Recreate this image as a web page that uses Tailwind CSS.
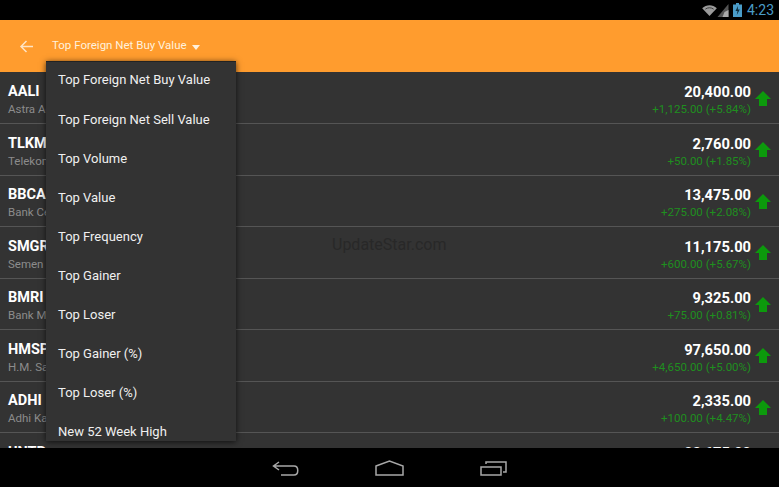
<!DOCTYPE html>
<html lang="en">

<head>
    <meta charset="UTF-8" />
    <title>Top Foreign Net Buy Value</title>
    <script src="https://cdn.jsdelivr.net/npm/@tailwindcss/browser@4"></script>
</head>

<body class="bg-black font-['Roboto',sans-serif]">
    <div class="relative w-[779px] h-[487px] overflow-hidden flex flex-col bg-black">

        <!-- status bar -->
        <div class="h-5 shrink-0 bg-black flex items-center justify-end pr-[5px]">
            <svg width="15" height="11" viewBox="0 0 16 12"><path d="M0 3.5C4.500 -0.800 11.500 -0.800 16 3.500L8 12Z" fill="#9a9a9a" /><path d="M3.500 4.500C6 2.500 10 2.500 12.500 4.500" stroke="#333" fill="none" /></svg>
            <svg width="12" height="13" viewBox="0 0 11 13"><path d="M11 0V13H0Z" fill="#555" /><path d="M11 6V13H5L7 8Z" fill="#aaa" /></svg>
            <svg width="9" height="14" viewBox="0 0 9 14" class="ml-[4px]"><path d="M3 0H6V1.500H9V14H0V1.500H3Z" fill="#4a9cc8" /><path d="M5 3L2.500 8H4.500L3.800 12L6.800 6.500H4.800Z" fill="#0b2a3a" /></svg>
            <span class="text-[14px] leading-5 text-[#4a9cc8] ml-[5px]">4:23</span>
        </div>

        <!-- action bar -->
        <div class="h-[52px] shrink-0 bg-[#ff9c2e] flex items-center">
            <svg width="14" height="13" viewBox="0 0 14 13" class="ml-[19px]" fill="none" stroke="#ffe4c4" stroke-width="1.500"><path d="M14 6.500H2M7.500 1L2 6.500L7.500 12" /></svg>
            <span class="ml-[19px] text-[11.500px] text-[#fff1dd]">Top Foreign Net Buy Value</span>
            <svg width="8" height="5" viewBox="0 0 8 5" class="ml-[5px] mt-[3px]"><path d="M0 0H8L4 5Z" fill="#fff1dd" /></svg>
        </div>

        <!-- stock list -->
        <div class="flex-1 bg-[#333333] overflow-hidden pt-[0.5px]">
            <div class="h-[51.500px] border-b border-[#555555] flex justify-between pl-2 pr-2">
                <div class="pt-[10.500px]">
                    <div class="text-[14.500px] leading-[18px] font-bold text-white">AALI</div>
                    <div class="text-[11.500px] leading-[16px] text-[#8c8c8c]">Astra Agro Lestari</div>
                </div>
                <div class="flex">
                    <div class="text-right pt-[10.500px]">
                        <div class="text-[14.700px] leading-[18px] font-bold text-white">20,400.00</div>
                        <div class="text-[11.500px] leading-[16px] text-[#1f8f1f]">+1,125.00 (+5.84%)</div>
                    </div>
                    <svg width="16" height="16" viewBox="0 0 16 16" class="ml-[4px] mt-[18px]"><path d="M8 0L16 8H12V15H4V8H0Z" fill="#0c9a0c" /></svg>
                </div>
            </div>
            <div class="h-[51.500px] border-b border-[#555555] flex justify-between pl-2 pr-2">
                <div class="pt-[10.500px]">
                    <div class="text-[14.500px] leading-[18px] font-bold text-white">TLKM</div>
                    <div class="text-[11.500px] leading-[16px] text-[#8c8c8c]">Telekomunikasi</div>
                </div>
                <div class="flex">
                    <div class="text-right pt-[10.500px]">
                        <div class="text-[14.700px] leading-[18px] font-bold text-white">2,760.00</div>
                        <div class="text-[11.500px] leading-[16px] text-[#1f8f1f]">+50.00 (+1.85%)</div>
                    </div>
                    <svg width="16" height="16" viewBox="0 0 16 16" class="ml-[4px] mt-[18px]"><path d="M8 0L16 8H12V15H4V8H0Z" fill="#0c9a0c" /></svg>
                </div>
            </div>
            <div class="h-[51.500px] border-b border-[#555555] flex justify-between pl-2 pr-2">
                <div class="pt-[10.500px]">
                    <div class="text-[14.500px] leading-[18px] font-bold text-white">BBCA</div>
                    <div class="text-[11.500px] leading-[16px] text-[#8c8c8c]">Bank Central Asia</div>
                </div>
                <div class="flex">
                    <div class="text-right pt-[10.500px]">
                        <div class="text-[14.700px] leading-[18px] font-bold text-white">13,475.00</div>
                        <div class="text-[11.500px] leading-[16px] text-[#1f8f1f]">+275.00 (+2.08%)</div>
                    </div>
                    <svg width="16" height="16" viewBox="0 0 16 16" class="ml-[4px] mt-[18px]"><path d="M8 0L16 8H12V15H4V8H0Z" fill="#0c9a0c" /></svg>
                </div>
            </div>
            <div class="h-[51.500px] border-b border-[#555555] flex justify-between pl-2 pr-2">
                <div class="pt-[10.500px]">
                    <div class="text-[14.500px] leading-[18px] font-bold text-white">SMGR</div>
                    <div class="text-[11.500px] leading-[16px] text-[#8c8c8c]">Semen Indonesia</div>
                </div>
                <div class="flex">
                    <div class="text-right pt-[10.500px]">
                        <div class="text-[14.700px] leading-[18px] font-bold text-white">11,175.00</div>
                        <div class="text-[11.500px] leading-[16px] text-[#1f8f1f]">+600.00 (+5.67%)</div>
                    </div>
                    <svg width="16" height="16" viewBox="0 0 16 16" class="ml-[4px] mt-[18px]"><path d="M8 0L16 8H12V15H4V8H0Z" fill="#0c9a0c" /></svg>
                </div>
            </div>
            <div class="h-[51.500px] border-b border-[#555555] flex justify-between pl-2 pr-2">
                <div class="pt-[10.500px]">
                    <div class="text-[14.500px] leading-[18px] font-bold text-white">BMRI</div>
                    <div class="text-[11.500px] leading-[16px] text-[#8c8c8c]">Bank Mandiri</div>
                </div>
                <div class="flex">
                    <div class="text-right pt-[10.500px]">
                        <div class="text-[14.700px] leading-[18px] font-bold text-white">9,325.00</div>
                        <div class="text-[11.500px] leading-[16px] text-[#1f8f1f]">+75.00 (+0.81%)</div>
                    </div>
                    <svg width="16" height="16" viewBox="0 0 16 16" class="ml-[4px] mt-[18px]"><path d="M8 0L16 8H12V15H4V8H0Z" fill="#0c9a0c" /></svg>
                </div>
            </div>
            <div class="h-[51.500px] border-b border-[#555555] flex justify-between pl-2 pr-2">
                <div class="pt-[10.500px]">
                    <div class="text-[14.500px] leading-[18px] font-bold text-white">HMSP</div>
                    <div class="text-[11.500px] leading-[16px] text-[#8c8c8c]">H.M. Sampoerna</div>
                </div>
                <div class="flex">
                    <div class="text-right pt-[10.500px]">
                        <div class="text-[14.700px] leading-[18px] font-bold text-white">97,650.00</div>
                        <div class="text-[11.500px] leading-[16px] text-[#1f8f1f]">+4,650.00 (+5.00%)</div>
                    </div>
                    <svg width="16" height="16" viewBox="0 0 16 16" class="ml-[4px] mt-[18px]"><path d="M8 0L16 8H12V15H4V8H0Z" fill="#0c9a0c" /></svg>
                </div>
            </div>
            <div class="h-[51.500px] border-b border-[#555555] flex justify-between pl-2 pr-2">
                <div class="pt-[10.500px]">
                    <div class="text-[14.500px] leading-[18px] font-bold text-white">ADHI</div>
                    <div class="text-[11.500px] leading-[16px] text-[#8c8c8c]">Adhi Karya</div>
                </div>
                <div class="flex">
                    <div class="text-right pt-[10.500px]">
                        <div class="text-[14.700px] leading-[18px] font-bold text-white">2,335.00</div>
                        <div class="text-[11.500px] leading-[16px] text-[#1f8f1f]">+100.00 (+4.47%)</div>
                    </div>
                    <svg width="16" height="16" viewBox="0 0 16 16" class="ml-[4px] mt-[18px]"><path d="M8 0L16 8H12V15H4V8H0Z" fill="#0c9a0c" /></svg>
                </div>
            </div>
            <div class="h-[51.500px] flex justify-between pl-2 pr-2">
                <div class="pt-[10.500px]">
                    <div class="text-[14.500px] leading-[18px] font-bold text-white">UNTR</div>
                </div>
                <div class="flex">
                    <div class="text-right pt-[10.500px]">
                        <div class="text-[14.700px] leading-[18px] font-bold text-white">23,675.00</div>
                    </div>
                    <svg width="16" height="16" viewBox="0 0 16 16" class="ml-[4px] mt-[18px]"><path d="M8 0L16 8H12V15H4V8H0Z" fill="#0c9a0c" /></svg>
                </div>
            </div>
        </div>

        <!-- nav bar -->
        <div class="h-[39px] shrink-0 bg-black relative z-10 flex items-start justify-center pt-[12px] gap-[76px]">
            <svg width="27" height="15" viewBox="0 0 27 15" class="mt-[1px]" fill="none" stroke="#a8a8a8" stroke-width="1.500"><path d="M7 1L1.500 5L7 9M2 5H22C27 5 27 14 22 14H9" /></svg>
            <svg width="29" height="16" viewBox="0 0 29 16" fill="none" stroke="#a8a8a8" stroke-width="1.500"><path d="M1 6L14.500 1L28 6V15H1Z" /></svg>
            <svg width="27" height="15" viewBox="0 0 27 15" class="mt-[1px]" fill="none" stroke="#a8a8a8" stroke-width="1.500"><path d="M1 6H21V14H1ZM6 3V1H26V11H23" /></svg>
        </div>

        <!-- watermark -->
        <div class="absolute left-[332px] top-[235px] text-[16px] leading-5 text-[#282828]">UpdateStar.com</div>

        <!-- dropdown menu -->
        <div class="absolute left-[46px] top-[61px] w-[190px] h-[380px] bg-[#333333] overflow-hidden shadow-[0_1px_6px_rgba(0,0,0,0.7)] border-t border-[#222222] z-20 pl-3 text-[13px] text-[#f0f0f0]">
            <div class="h-[39px] leading-[36px]">Top Foreign Net Buy Value</div>
            <div class="h-[39px] leading-[37px]">Top Foreign Net Sell Value</div>
            <div class="h-[39px] leading-[37px]">Top Volume</div>
            <div class="h-[39px] leading-[37px]">Top Value</div>
            <div class="h-[39px] leading-[37px]">Top Frequency</div>
            <div class="h-[39px] leading-[37px]">Top Gainer</div>
            <div class="h-[39px] leading-[37px]">Top Loser</div>
            <div class="h-[39px] leading-[37px]">Top Gainer (%)</div>
            <div class="h-[39px] leading-[37px]">Top Loser (%)</div>
            <div class="h-[39px] leading-[37px]">New 52 Week High</div>
        </div>
    </div>
</body>

</html>
